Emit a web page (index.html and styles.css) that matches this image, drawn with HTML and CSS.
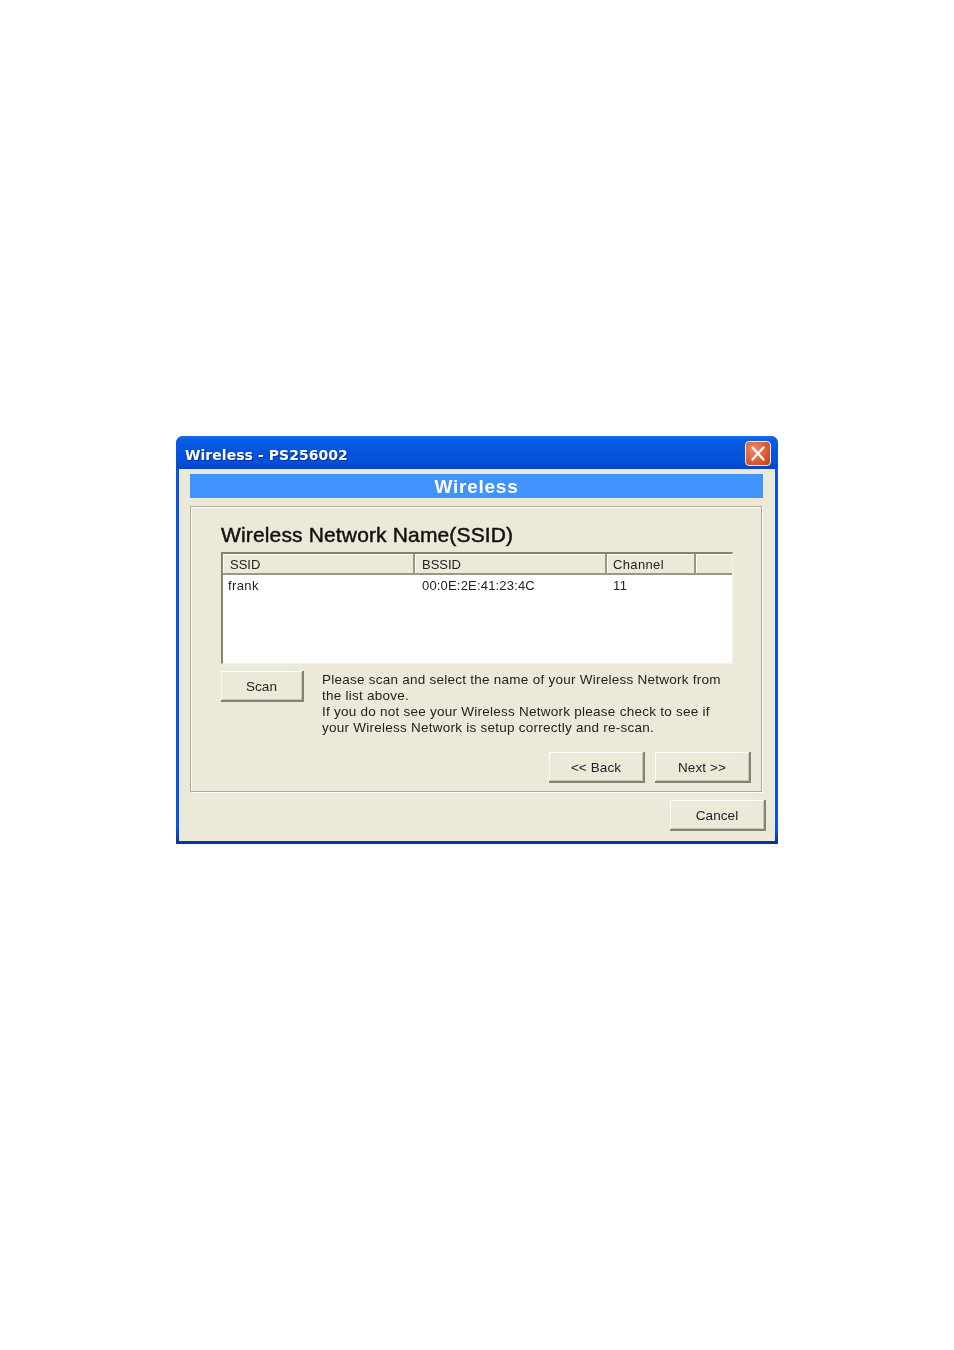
FILE: index.html
```html
<!DOCTYPE html>
<html lang="en">
<head>
<meta charset="utf-8">
<title>Wireless - PS256002</title>
<link rel="stylesheet" href="styles.css">
</head>
<body>
<div class="window">
  <div class="titlebar">
    <span class="title">Wireless - PS256002</span>
    <span class="close">
      <svg viewBox="0 0 26 25" width="26" height="25"><path d="M7.5 6.5 L18.5 18.5 M18.5 6.5 L7.5 18.5" stroke="#fff" stroke-width="2.2" stroke-linecap="square" fill="none"/></svg>
    </span>
  </div>
  <div class="client">
    <div class="banner">Wireless</div>
    <div class="panel">
      <h1 class="heading">Wireless Network Name(SSID)</h1>
      <div class="list">
        <div class="list-head">
          <div class="col col-ssid">SSID</div>
          <div class="col col-bssid">BSSID</div>
          <div class="col col-channel">Channel</div>
          <div class="col col-rest"></div>
        </div>
        <div class="list-row">
          <div class="cell col-ssid">frank</div>
          <div class="cell col-bssid">00:0E:2E:41:23:4C</div>
          <div class="cell col-channel">11</div>
        </div>
      </div>
      <div class="scan-row">
        <button class="btn btn-scan">Scan</button>
        <p class="help">Please scan and select the name of your Wireless Network from<br>the list above.<br>If you do not see your Wireless Network please check to see if<br>your Wireless Network is setup correctly and re-scan.</p>
      </div>
      <div class="nav-row">
        <button class="btn">&lt;&lt; Back</button>
        <button class="btn">Next &gt;&gt;</button>
      </div>
    </div>
    <div class="footer-row">
      <button class="btn">Cancel</button>
    </div>
  </div>
</div>
</body>
</html>
```
FILE: styles.css
```css
* { box-sizing: border-box; }
html, body { margin: 0; background: #fff; }
body { padding: 436px 0 0 176px; height: 1350px; overflow: hidden; font-family: "Liberation Sans", Arial, sans-serif; color: #111; }

.window {
  width: 602px; height: 408px;
  display: flex; flex-direction: column;
  background: linear-gradient(180deg, #0a55e0 0%, #0a55e0 96%, #0b3fc4 98%, #0a2f9e 100%);
  border-radius: 7px 7px 0 0;
  filter: blur(0.4px);
  overflow: hidden;
}
.titlebar {
  height: 33px; flex: none;
  display: flex; align-items: center; justify-content: space-between;
  padding: 2px 7px 0 9px;
  background: linear-gradient(180deg, #1a6cf0 0%, #0a5de6 10%, #0553dc 50%, #0450d8 80%, #0344c4 100%);
}
.title {
  font-family: "DejaVu Sans", sans-serif;
  font-weight: 700; font-size: 14px; color: #fff;
  letter-spacing: 0.05px; padding-top: 2px;
  text-shadow: 1px 1px 0 #0a2f96;
}
.close {
  width: 26px; height: 25px; display: block;
  border: 1px solid #e8eefc; border-radius: 4px;
  background: radial-gradient(circle at 35% 35%, #ee8a68, #d5512c 70%, #bf3d1c);
}
.close svg { display: block; margin: -1px; }

.client {
  flex: 1;
  margin: 0 3px 3px 3px;
  padding: 5px 11px 0 11px;
  background: #ece9d8;
  display: flex; flex-direction: column;
}
.banner {
  height: 24px; width: 573px; flex: none;
  background: #3f93fb;
  color: #fff; text-align: center;
  font-weight: 700; font-size: 19px; line-height: 25px; letter-spacing: 0.75px;
}
.panel {
  margin-top: 8px; width: 572px; height: 286px; flex: none;
  border: 1px solid #aca899;
  box-shadow: inset 1px 1px 0 #fff, 1px 1px 0 #fff;
  padding: 15px 28px 0 30px;
  display: flex; flex-direction: column;
}
.heading {
  margin: 0; height: 30px;
  font-size: 21px; font-weight: 400; line-height: 26px;
  -webkit-text-stroke: 0.45px #111; letter-spacing: 0.15px;
}
.list {
  width: 512px; height: 112px; flex: none;
  border: 1px solid #f4f2e6;
  border-top-color: #85826f; border-left-color: #85826f;
  border-top-width: 2px; border-left-width: 2px;
  background: #fff; font-size: 13px;
}
.list-head {
  display: flex; height: 21px; background: #ece9d8;
  border-bottom: 2px solid #9a9784;
}
.col {
  line-height: 21px; padding-left: 7px; color: #222;
  border-right: 2px solid #9a9784;
  box-shadow: inset 1px 1px 0 #fff;
}
.col-ssid { width: 192px; }
.col-bssid { width: 192px; }
.col-channel { width: 89px; }
.col-rest { flex: 1; border-right: 0; }
.list-head .col-channel { padding-left: 6px; letter-spacing: 0.35px; }
.list-row { display: flex; height: 22px; line-height: 21px; }
.cell { padding-left: 5px; color: #222; }
.list-row .col-ssid { letter-spacing: 0.4px; }
.list-row .col-bssid { padding-left: 7px; letter-spacing: 0.18px; }
.list-row .col-channel { padding-left: 6px; letter-spacing: 0.4px; }

.scan-row { display: flex; margin-top: 7px; height: 72px; flex: none; }
.btn {
  width: 96px; height: 31px; padding: 1px 0 0; flex: none;
  background: #ece9d8; color: #222;
  font-family: "Liberation Sans", Arial, sans-serif; font-size: 13.5px; letter-spacing: 0.1px;
  border: 0;
  border-right: 2px solid #85826f; border-bottom: 2px solid #85826f;
  box-shadow: inset 1px 1px 0 #fff, inset -1px -1px 0 #c9c5b2;
}
.btn-scan { width: 83px; }
.help {
  margin: 1px 0 0 18px; font-size: 13.5px; line-height: 16px; color: #222;
  letter-spacing: 0.25px; white-space: nowrap;
}
.nav-row {
  display: flex; justify-content: flex-end; gap: 10px;
  margin-top: 9px; width: 530px;
}
.footer-row {
  display: flex; justify-content: flex-end;
  margin-top: 8px; width: 576px;
}
```
